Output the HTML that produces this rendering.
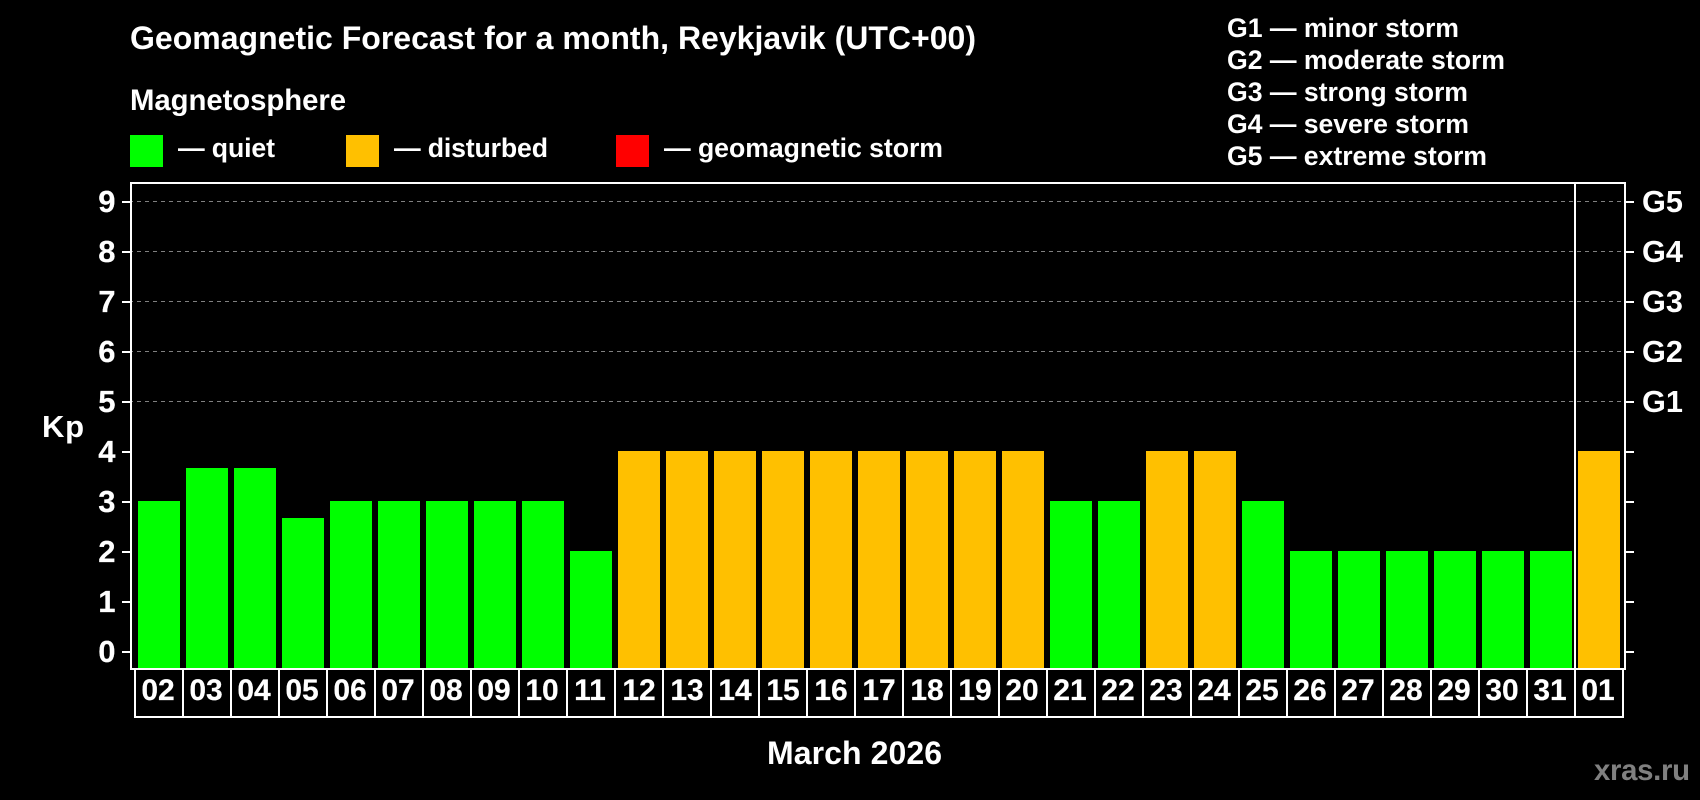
<!DOCTYPE html>
<html><head><meta charset="utf-8"><title>Geomagnetic Forecast</title>
<style>
html,body{margin:0;padding:0;background:#000;width:1700px;height:800px;overflow:hidden}
svg{display:block}
text{font-family:"Liberation Sans",sans-serif;font-weight:bold;fill:#fff}
.g{fill:#00ff00}.o{fill:#ffc000}
.d{font-size:30px;text-anchor:middle;stroke:#fff;stroke-width:.2px}
.y{font-size:31px;text-anchor:end;stroke:#fff;stroke-width:.2px}
.l{font-size:26.67px}
</style></head><body>
<svg width="1700" height="800" viewBox="0 0 1700 800" xmlns="http://www.w3.org/2000/svg">
<rect width="1700" height="800" fill="#000"/>
<text x="130" y="49" font-size="32" textLength="846">Geomagnetic Forecast for a month, Reykjavik (UTC+00)</text>
<text x="130" y="110" font-size="29.33" textLength="216">Magnetosphere</text>
<g shape-rendering="crispEdges">
<rect x="130" y="135" width="33" height="32" fill="#00ff00"/>
<rect x="346" y="135" width="33" height="32" fill="#ffc000"/>
<rect x="616" y="135" width="33" height="32" fill="#ff0000"/>
</g>
<text class="l" x="178" y="157" textLength="97">— quiet</text>
<text class="l" x="394" y="157" textLength="154">— disturbed</text>
<text class="l" x="664" y="157" textLength="279">— geomagnetic storm</text>
<text class="l" x="1227" y="37" textLength="232">G1 — minor storm</text>
<text class="l" x="1227" y="69" textLength="278">G2 — moderate storm</text>
<text class="l" x="1227" y="101" textLength="241">G3 — strong storm</text>
<text class="l" x="1227" y="133" textLength="242">G4 — severe storm</text>
<text class="l" x="1227" y="165" textLength="260">G5 — extreme storm</text>
<g shape-rendering="crispEdges">
<g stroke="#808080" stroke-width="1" stroke-dasharray="4 4">
<path d="M129 201.5H1624M129 251.5H1624M129 301.5H1624M129 351.5H1624M129 401.5H1624"/>
</g>
<rect x="138" y="501" width="42" height="167" class="g"/>
<rect x="186" y="468" width="42" height="200" class="g"/>
<rect x="234" y="468" width="42" height="200" class="g"/>
<rect x="282" y="518" width="42" height="150" class="g"/>
<rect x="330" y="501" width="42" height="167" class="g"/>
<rect x="378" y="501" width="42" height="167" class="g"/>
<rect x="426" y="501" width="42" height="167" class="g"/>
<rect x="474" y="501" width="42" height="167" class="g"/>
<rect x="522" y="501" width="42" height="167" class="g"/>
<rect x="570" y="551" width="42" height="117" class="g"/>
<rect x="618" y="451" width="42" height="217" class="o"/>
<rect x="666" y="451" width="42" height="217" class="o"/>
<rect x="714" y="451" width="42" height="217" class="o"/>
<rect x="762" y="451" width="42" height="217" class="o"/>
<rect x="810" y="451" width="42" height="217" class="o"/>
<rect x="858" y="451" width="42" height="217" class="o"/>
<rect x="906" y="451" width="42" height="217" class="o"/>
<rect x="954" y="451" width="42" height="217" class="o"/>
<rect x="1002" y="451" width="42" height="217" class="o"/>
<rect x="1050" y="501" width="42" height="167" class="g"/>
<rect x="1098" y="501" width="42" height="167" class="g"/>
<rect x="1146" y="451" width="42" height="217" class="o"/>
<rect x="1194" y="451" width="42" height="217" class="o"/>
<rect x="1242" y="501" width="42" height="167" class="g"/>
<rect x="1290" y="551" width="42" height="117" class="g"/>
<rect x="1338" y="551" width="42" height="117" class="g"/>
<rect x="1386" y="551" width="42" height="117" class="g"/>
<rect x="1434" y="551" width="42" height="117" class="g"/>
<rect x="1482" y="551" width="42" height="117" class="g"/>
<rect x="1530" y="551" width="42" height="117" class="g"/>
<rect x="1578" y="451" width="42" height="217" class="o"/>
<g fill="#fff">
<rect x="130" y="182" width="1496" height="2"/>
<rect x="130" y="182" width="2" height="488"/>
<rect x="1624" y="182" width="2" height="488"/>
<rect x="1574" y="182" width="2" height="486"/>
<rect x="130" y="668" width="1496" height="2"/>
<rect x="134" y="716" width="1490" height="2"/>
<path d="M134 670h2v46h-2zM182 670h2v46h-2zM230 670h2v46h-2zM278 670h2v46h-2zM326 670h2v46h-2zM374 670h2v46h-2zM422 670h2v46h-2zM470 670h2v46h-2zM518 670h2v46h-2zM566 670h2v46h-2zM614 670h2v46h-2zM662 670h2v46h-2zM710 670h2v46h-2zM758 670h2v46h-2zM806 670h2v46h-2zM854 670h2v46h-2zM902 670h2v46h-2zM950 670h2v46h-2zM998 670h2v46h-2zM1046 670h2v46h-2zM1094 670h2v46h-2zM1142 670h2v46h-2zM1190 670h2v46h-2zM1238 670h2v46h-2zM1286 670h2v46h-2zM1334 670h2v46h-2zM1382 670h2v46h-2zM1430 670h2v46h-2zM1478 670h2v46h-2zM1526 670h2v46h-2zM1574 670h2v46h-2zM1622 670h2v46h-2z"/>
<path d="M122 201h8v2h-8zM122 251h8v2h-8zM122 301h8v2h-8zM122 351h8v2h-8zM122 401h8v2h-8zM122 451h8v2h-8zM122 501h8v2h-8zM122 551h8v2h-8zM122 601h8v2h-8zM122 651h8v2h-8z"/>
<path d="M1626 201h8v2h-8zM1626 251h8v2h-8zM1626 301h8v2h-8zM1626 351h8v2h-8zM1626 401h8v2h-8zM1626 451h8v2h-8zM1626 501h8v2h-8zM1626 551h8v2h-8zM1626 601h8v2h-8zM1626 651h8v2h-8z"/>
</g>
</g>
<text class="y" x="115.5" y="212">9</text>
<text class="y" x="115.5" y="262">8</text>
<text class="y" x="115.5" y="312">7</text>
<text class="y" x="115.5" y="362">6</text>
<text class="y" x="115.5" y="412">5</text>
<text class="y" x="115.5" y="462">4</text>
<text class="y" x="115.5" y="512">3</text>
<text class="y" x="115.5" y="562">2</text>
<text class="y" x="115.5" y="612">1</text>
<text class="y" x="115.5" y="662">0</text>
<text x="42" y="437" font-size="31" textLength="42">Kp</text>
<g font-size="30.67">
<text x="1642" y="212">G5</text>
<text x="1642" y="262">G4</text>
<text x="1642" y="312">G3</text>
<text x="1642" y="362">G2</text>
<text x="1642" y="412">G1</text>
</g>
<text class="d" x="158" y="700">02</text>
<text class="d" x="206" y="700">03</text>
<text class="d" x="254" y="700">04</text>
<text class="d" x="302" y="700">05</text>
<text class="d" x="350" y="700">06</text>
<text class="d" x="398" y="700">07</text>
<text class="d" x="446" y="700">08</text>
<text class="d" x="494" y="700">09</text>
<text class="d" x="542" y="700">10</text>
<text class="d" x="590" y="700">11</text>
<text class="d" x="639" y="700">12</text>
<text class="d" x="687" y="700">13</text>
<text class="d" x="735" y="700">14</text>
<text class="d" x="783" y="700">15</text>
<text class="d" x="831" y="700">16</text>
<text class="d" x="879" y="700">17</text>
<text class="d" x="927" y="700">18</text>
<text class="d" x="975" y="700">19</text>
<text class="d" x="1022" y="700">20</text>
<text class="d" x="1070" y="700">21</text>
<text class="d" x="1118" y="700">22</text>
<text class="d" x="1166" y="700">23</text>
<text class="d" x="1214" y="700">24</text>
<text class="d" x="1262" y="700">25</text>
<text class="d" x="1310" y="700">26</text>
<text class="d" x="1358" y="700">27</text>
<text class="d" x="1406" y="700">28</text>
<text class="d" x="1454" y="700">29</text>
<text class="d" x="1502" y="700">30</text>
<text class="d" x="1550" y="700">31</text>
<text class="d" x="1598" y="700">01</text>
<text x="767" y="764" font-size="32" textLength="175">March 2026</text>
<text x="1594" y="780" font-size="29.33" style="fill:#808080" textLength="96">xras.ru</text>
</svg>
</body></html>
